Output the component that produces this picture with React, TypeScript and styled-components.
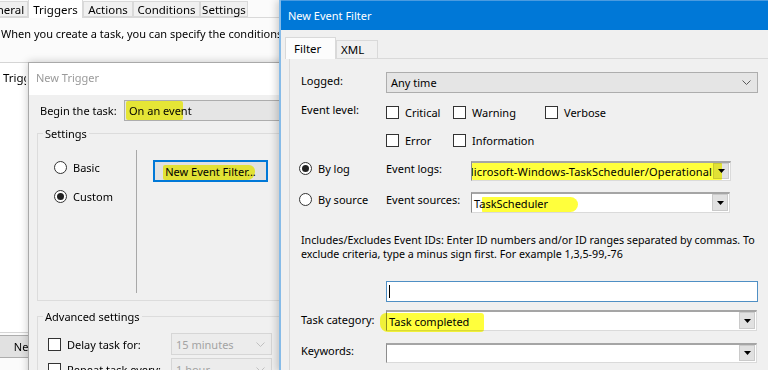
import React from "react";
import styled, { createGlobalStyle } from "styled-components";

const Global = createGlobalStyle`
  html, body { margin: 0; padding: 0; }
  body { width: 768px; height: 370px; overflow: hidden; background: #fbfbfb; }
  * { box-sizing: border-box; }
`;

const Desktop = styled.div`
  position: relative;
  width: 768px;
  height: 370px;
  overflow: hidden;
  background: #fbfbfb;
  font-family: "Noto Sans", "Open Sans", sans-serif;
  font-size: 11px;
  line-height: 15px;
  color: #000;
`;

/* ---------- background: task properties window ---------- */
const TaskWindow = styled.div`
  display: flex;
  flex-direction: column;
  height: 100%;
`;

const TabStrip = styled.div`
  display: flex;
  align-items: flex-end;
  height: 18px;
  border-bottom: 1px solid #d9d9d9;
  flex: none;
`;

const Tab = styled.div<{ $w: number; $active?: boolean; $shift?: number }>`
  width: ${(p) => p.$w}px;
  margin-left: ${(p) => p.$shift ?? 0}px;
  height: ${(p) => (p.$active ? 19 : 16)}px;
  margin-bottom: ${(p) => (p.$active ? -1 : 0)}px;
  background: ${(p) => (p.$active ? "#ffffff" : "#f0f0f0")};
  border: 1px solid #d9d9d9;
  border-bottom: ${(p) => (p.$active ? "none" : "1px solid #d9d9d9")};
  display: flex;
  align-items: center;
  justify-content: center;
  white-space: nowrap;
  font-size: 11.5px;
  flex: none;
`;

const Description = styled.div`
  margin-top: 8px;
  padding-left: 1px;
  white-space: nowrap;
`;

const ListBox = styled.div`
  margin-top: 21px;
  height: 271px;
  background: #ffffff;
  border-top: 1px solid #d5d5d5;
  border-bottom: 1px solid #d5d5d5;
  flex: none;
`;

const ListHeader = styled.div`
  padding: 7px 0 0 3px;
  width: 26px;
  overflow: hidden;
  white-space: nowrap;
  font-size: 11.5px;
`;

const ButtonRow = styled.div`
  display: flex;
  padding-top: 2px;
`;

const PushButton = styled.div<{ $w: number; $shift?: number }>`
  width: ${(p) => p.$w}px;
  margin-left: ${(p) => p.$shift ?? 0}px;
  height: 23px;
  background: #e1e1e1;
  border: 1px solid #adadad;
  display: flex;
  align-items: center;
  justify-content: center;
  flex: none;
`;

/* ---------- windows on the desktop ---------- */
const TriggerDialog = styled.div`
  position: absolute;
  left: 28px;
  top: 62px;
  width: 262px;
  height: 320px;
  border: 1px solid #a9a9a9;
  box-shadow: 0 0 8px rgba(0, 0, 0, 0.22);
  background: #f0f0f0;
  display: flex;
  flex-direction: column;
`;

const InactiveTitle = styled.div`
  height: 32px;
  background: #ffffff;
  color: #9a9a9a;
  padding: 0 0 4px 7px;
  display: flex;
  align-items: center;
  flex: none;
`;

const DialogBody = styled.div`
  display: flex;
  flex-direction: column;
  padding-left: 8px;
`;

const BeginRow = styled.div`
  display: flex;
  align-items: center;
  margin-top: 5px;
  padding-left: 3px;
  height: 21px;
`;

const FieldLabel = styled.div<{ $w: number; $pt?: number }>`
  width: ${(p) => p.$w}px;
  padding-top: ${(p) => p.$pt ?? 0}px;
  white-space: nowrap;
  flex: none;
`;

const FlatCombo = styled.div<{ $w: number; $h?: number; $disabled?: boolean }>`
  position: relative;
  width: ${(p) => p.$w}px;
  height: ${(p) => p.$h ?? 21}px;
  background: ${(p) => (p.$disabled ? "#ececec" : "#e5e5e5")};
  border: 1px solid ${(p) => (p.$disabled ? "#d6d6d6" : "#adadad")};
  color: ${(p) => (p.$disabled ? "#a3a3a3" : "#000")};
  display: flex;
  align-items: center;
  justify-content: space-between;
  padding: 0 6px 0 4px;
  white-space: nowrap;
  flex: none;
`;

const GroupBox = styled.fieldset<{ $mt: number }>`
  margin: ${(p) => p.$mt}px 0 0 0;
  padding: 0 0 7px 0;
  width: 262px;
  min-width: 0;
  border: 1px solid #dcdcdc;
`;

const GroupLegend = styled.legend`
  margin-left: 5px;
  padding: 0 2px;
  line-height: 15px;
`;

const SettingsInner = styled.div`
  display: flex;
  margin-top: 9px;
  height: 143px;
`;

const RadioColumn = styled.div`
  width: 98px;
  padding: 10px 0 0 16px;
  display: flex;
  flex-direction: column;
  gap: 15px;
  flex: none;
`;

const VerticalRule = styled.div`
  width: 1px;
  background: #a8a8a8;
  flex: none;
`;

const ButtonColumn = styled.div`
  padding: 10px 0 0 16px;
`;

const FocusButton = styled.div`
  position: relative;
  width: 115px;
  height: 22px;
  background: #e1e1e1;
  border: 2px solid #0078d7;
  display: flex;
  align-items: center;
  justify-content: center;
  white-space: nowrap;
`;

const Choice = styled.div<{ $nudge?: boolean }>`
  display: flex;
  align-items: center;
  gap: 6px;
  height: 14px;
  white-space: nowrap;
  margin-left: ${(p) => (p.$nudge ? -2 : 0)}px;
`;

const RadioCircle = styled.span<{ $on?: boolean }>`
  width: 13px;
  height: 13px;
  border: 1px solid #333;
  border-radius: 50%;
  background: #fff;
  display: inline-flex;
  align-items: center;
  justify-content: center;
  flex: none;
  &::after {
    content: "";
    width: 7px;
    height: 7px;
    border-radius: 50%;
    background: #222;
    display: ${(p) => (p.$on ? "block" : "none")};
  }
`;

const CheckBox = styled.span`
  width: 13px;
  height: 13px;
  border: 1px solid #333;
  background: #fff;
  flex: none;
`;

const AdvancedInner = styled.div`
  padding: 9px 0 0 10px;
  display: flex;
  flex-direction: column;
  gap: 3px;
`;

const AdvancedRow = styled.div`
  display: flex;
  align-items: center;
  height: 22px;
`;

const CheckLabel = styled(Choice)`
  width: 123px;
  flex: none;
`;

/* ---------- New Event Filter window ---------- */
const FilterWindow = styled.div`
  position: absolute;
  left: 279px;
  top: 0;
  width: 500px;
  height: 372px;
  border-left: 2px solid #86bbe8;
  background: #f0f0f0;
  box-shadow: -2px 0 8px rgba(0, 0, 0, 0.2);
  display: flex;
  flex-direction: column;
`;

const ActiveTitle = styled.div`
  height: 30px;
  background: #0078d7;
  border-top: 1px solid #4a9be0;
  color: #fff;
  padding-left: 7px;
  display: flex;
  align-items: center;
  flex: none;
`;

const FilterTabs = styled.div`
  display: flex;
  align-items: flex-end;
  height: 21px;
  margin-top: 7px;
  padding-left: 4px;
  position: relative;
  z-index: 1;
  flex: none;
`;

const FilterTab = styled.div<{ $w: number; $active?: boolean }>`
  width: ${(p) => p.$w}px;
  height: ${(p) => (p.$active ? 22 : 18)}px;
  margin-bottom: ${(p) => (p.$active ? -1 : 0)}px;
  background: ${(p) => (p.$active ? "#fcfcfc" : "#f0f0f0")};
  border: 1px solid #d9d9d9;
  border-bottom: none;
  padding-left: ${(p) => (p.$active ? 8 : 4)}px;
  display: flex;
  align-items: center;
  font-size: 11.5px;
  flex: none;
`;

const Panel = styled.div`
  margin-left: 8px;
  flex: 1;
  background: #f0f0f0;
  border: 1px solid #d9d9d9;
  padding: 13px 0 0 11px;
  display: flex;
  flex-direction: column;
`;

const FormRow = styled.div<{ $mt: number; $h?: number; $cols?: string }>`
  display: grid;
  grid-template-columns: ${(p) => p.$cols ?? "85px auto"};
  align-items: start;
  margin-top: ${(p) => p.$mt}px;
  height: ${(p) => (p.$h ? `${p.$h}px` : "auto")};
  flex: none;
`;

const LevelGrid = styled.div`
  display: grid;
  grid-template-columns: 67px 92px auto;
  grid-auto-rows: 20px;
  row-gap: 8px;
  align-items: center;
`;

const HelpText = styled.div`
  margin-top: 20px;
  font-size: 10.7px;
  line-height: 14px;
  white-space: nowrap;
  flex: none;
`;

const HelpLine = styled.span`
  display: block;
`;

const SunkenCombo = styled.div<{ $w: number; $h?: number }>`
  position: relative;
  width: ${(p) => p.$w}px;
  height: ${(p) => p.$h ?? 21}px;
  background: #fff;
  border-top: 2px solid #a5a5a5;
  border-left: 1px solid #8c8c8c;
  border-right: 1px solid #dadada;
  border-bottom: 1px solid #dadada;
  display: flex;
  flex: none;
`;

const ComboText = styled.div<{ $end?: boolean }>`
  flex: 1;
  min-width: 0;
  overflow: hidden;
  white-space: nowrap;
  display: flex;
  align-items: center;
  justify-content: ${(p) => (p.$end ? "flex-end" : "flex-start")};
  letter-spacing: ${(p) => (p.$end ? "0.15px" : "0")};
  padding: 0 1px 0 2px;
`;

const DropButton = styled.div`
  width: 16px;
  margin: 0 1px 1px 0;
  background: #e1e1e1;
  border: 1px solid #cacaca;
  display: flex;
  align-items: center;
  justify-content: center;
  flex: none;
`;

const TextInput = styled.div`
  width: 372px;
  height: 21px;
  background: #fff;
  border: 1px solid #4f8fc4;
  display: flex;
  align-items: center;
  padding-left: 2px;
`;

const Caret = styled.span`
  width: 1px;
  height: 13px;
  background: #000;
`;

const Highlight = styled.span<{ $l: number; $t: number; $w: number; $h: number; $r?: string }>`
  position: absolute;
  left: ${(p) => p.$l}px;
  top: ${(p) => p.$t}px;
  width: ${(p) => p.$w}px;
  height: ${(p) => p.$h}px;
  background: #ffff3c;
  mix-blend-mode: multiply;
  border-radius: ${(p) => p.$r ?? "2px"};
  pointer-events: none;
`;

const Chevron = ({ color }: { color: string }) => (
  <svg width="9" height="5" viewBox="0 0 9 5">
    <polyline points="0.5,0.5 4.5,4.5 8.5,0.5" fill="none" stroke={color} strokeWidth="1" />
  </svg>
);

const Triangle = () => (
  <svg width="7" height="4" viewBox="0 0 7 4">
    <polygon points="0,0 7,0 3.5,4" fill="#000" />
  </svg>
);

export default function App() {
  return (
    <Desktop>
      <Global />
      <TaskWindow>
        <TabStrip>
          <Tab $w={50} $shift={-22}>General</Tab>
          <Tab $w={55} $active>Triggers</Tab>
          <Tab $w={50}>Actions</Tab>
          <Tab $w={67}>Conditions</Tab>
          <Tab $w={48}>Settings</Tab>
        </TabStrip>
        <Description>
          When you create a task, you can specify the conditions that will trigger the task.
        </Description>
        <ListBox>
          <ListHeader>Trigger</ListHeader>
        </ListBox>
        <ButtonRow>
          <PushButton $w={75} $shift={-8}>New...</PushButton>
        </ButtonRow>
      </TaskWindow>

      <TriggerDialog>
        <InactiveTitle>New Trigger</InactiveTitle>
        <DialogBody>
          <BeginRow>
            <FieldLabel $w={84}>Begin the task:</FieldLabel>
            <FlatCombo $w={200}>
              <span>On an event</span>
              <Highlight $l={1} $t={0} $w={57} $h={19} />
            </FlatCombo>
          </BeginRow>
          <GroupBox $mt={5}>
            <GroupLegend>Settings</GroupLegend>
            <SettingsInner>
              <RadioColumn>
                <Choice>
                  <RadioCircle />
                  Basic
                </Choice>
                <Choice>
                  <RadioCircle $on />
                  Custom
                </Choice>
              </RadioColumn>
              <VerticalRule />
              <ButtonColumn>
                <FocusButton>
                  New Event Filter...
                  <Highlight $l={8} $t={3} $w={92} $h={15} $r="2px 6px 8px 2px" />
                </FocusButton>
              </ButtonColumn>
            </SettingsInner>
          </GroupBox>
          <GroupBox $mt={8}>
            <GroupLegend>Advanced settings</GroupLegend>
            <AdvancedInner>
              <AdvancedRow>
                <CheckLabel>
                  <CheckBox />
                  Delay task for:
                </CheckLabel>
                <FlatCombo $w={101} $h={22} $disabled>
                  <span>15 minutes</span>
                  <Chevron color="#c0c0c0" />
                </FlatCombo>
              </AdvancedRow>
              <AdvancedRow>
                <CheckLabel>
                  <CheckBox />
                  Repeat task every:
                </CheckLabel>
                <FlatCombo $w={101} $h={22} $disabled>
                  <span>1 hour</span>
                  <Chevron color="#c0c0c0" />
                </FlatCombo>
              </AdvancedRow>
            </AdvancedInner>
          </GroupBox>
        </DialogBody>
      </TriggerDialog>

      <FilterWindow>
        <ActiveTitle>New Event Filter</ActiveTitle>
        <FilterTabs>
          <FilterTab $w={51} $active>Filter</FilterTab>
          <FilterTab $w={42}>XML</FilterTab>
        </FilterTabs>
        <Panel>
          <FormRow $mt={0} $h={21}>
            <FieldLabel $w={85} $pt={1}>Logged:</FieldLabel>
            <FlatCombo $w={372}>
              <span>Any time</span>
              <Chevron color="#5a5a5a" />
            </FlatCombo>
          </FormRow>

          <FormRow $mt={9}>
            <FieldLabel $w={85}>Event level:</FieldLabel>
            <LevelGrid>
              <Choice><CheckBox />Critical</Choice>
              <Choice><CheckBox />Warning</Choice>
              <Choice><CheckBox />Verbose</Choice>
              <Choice><CheckBox />Error</Choice>
              <Choice><CheckBox />Information</Choice>
            </LevelGrid>
          </FormRow>

          <FormRow $mt={11} $h={20} $cols="85px 85px auto">
            <Choice $nudge>
              <RadioCircle $on />
              By log
            </Choice>
            <FieldLabel $w={85}>Event logs:</FieldLabel>
            <SunkenCombo $w={260} $h={20}>
              <ComboText $end>Microsoft-Windows-TaskScheduler/Operational</ComboText>
              <DropButton><Triangle /></DropButton>
              <Highlight $l={0} $t={0} $w={250} $h={17} $r="1px" />
            </SunkenCombo>
          </FormRow>

          <FormRow $mt={11} $h={21} $cols="85px 85px auto">
            <Choice $nudge>
              <RadioCircle />
              By source
            </Choice>
            <FieldLabel $w={85}>Event sources:</FieldLabel>
            <SunkenCombo $w={259}>
              <ComboText>TaskScheduler</ComboText>
              <DropButton><Triangle /></DropButton>
              <Highlight $l={10} $t={3} $w={96} $h={15} $r="1px 10px 10px 1px" />
            </SunkenCombo>
          </FormRow>

          <HelpText>
            <HelpLine>
              Includes/Excludes Event IDs: Enter ID numbers and/or ID ranges separated by commas. To
            </HelpLine>
            <HelpLine>exclude criteria, type a minus sign first. For example 1,3,5-99,-76</HelpLine>
          </HelpText>

          <FormRow $mt={20} $h={21}>
            <span />
            <TextInput>
              <Caret />
            </TextInput>
          </FormRow>

          <FormRow $mt={8} $h={21}>
            <FieldLabel $w={85} $pt={2}>Task category:</FieldLabel>
            <SunkenCombo $w={371}>
              <ComboText>Task completed</ComboText>
              <DropButton><Triangle /></DropButton>
              <Highlight $l={-7} $t={1} $w={104} $h={19} $r="6px 3px 3px 8px" />
            </SunkenCombo>
          </FormRow>

          <FormRow $mt={12} $h={20}>
            <FieldLabel $w={85}>Keywords:</FieldLabel>
            <SunkenCombo $w={371} $h={20}>
              <ComboText />
              <DropButton><Triangle /></DropButton>
            </SunkenCombo>
          </FormRow>
        </Panel>
      </FilterWindow>
    </Desktop>
  );
}
